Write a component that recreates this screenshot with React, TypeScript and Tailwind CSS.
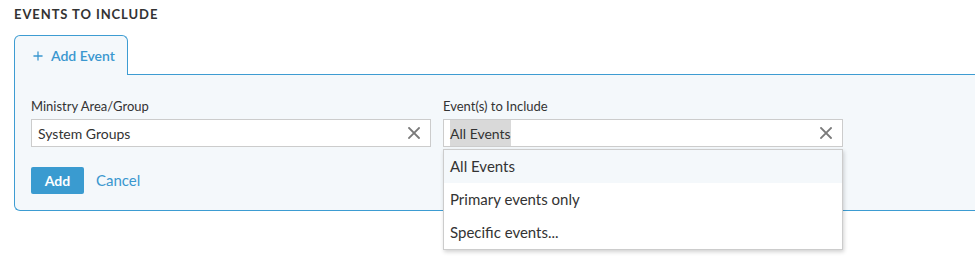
import { Plus } from "lucide-react";

const options = ["All Events", "Primary events only", "Specific events..."];

function ClearIcon() {
  return (
    <svg width="12" height="12" viewBox="0 0 12 12" className="shrink-0">
      <path d="M1 1L11 11M11 1L1 11" stroke="#7a7a7a" strokeWidth="1.8" strokeLinecap="square" />
    </svg>
  );
}

export default function App() {
  return (
    <div
      className="w-full h-[266px] bg-white text-[#333] overflow-hidden"
      style={{ fontFamily: "Lato, 'Open Sans', sans-serif" }}
    >
      {/* 标题 */}
      <div className="pl-[14px] pt-[6px] text-[13px] font-bold tracking-[0.07em] uppercase leading-[16px] text-[#333]">
        Events to Include
      </div>

      <div className="pl-[14px] mt-[13px]">
        {/* 标签页 */}
        <div className="relative z-10 -mb-px flex h-[40px] w-[114px] items-center gap-[6px] rounded-t-[6px] border border-b-0 border-[#3d9cd2] bg-[#f4f8fb] pl-[16px] text-[14px] font-semibold text-[#3a97cf]">
          <Plus size={14} strokeWidth={2.2} />
          <span>Add Event</span>
        </div>

        {/* 面板 */}
        <div className="rounded-bl-[6px] border border-r-0 border-[#3d9cd2] bg-[#f4f8fb] pl-[16px] pt-[22px] pb-[16px]">
          <div className="flex gap-[12px]">
            <div className="w-[400px]">
              <div className="text-[13px] leading-[18px] mb-[4px]">Ministry Area/Group</div>
              <div className="flex h-[28px] items-center justify-between border border-[#ccc] bg-white pl-[6px] pr-[10px] text-[14px]">
                <span>System Groups</span>
                <ClearIcon />
              </div>
            </div>
            <div className="relative w-[400px]">
              <div className="text-[13px] leading-[18px] mb-[4px]">Event(s) to Include</div>
              <div className="flex h-[28px] items-center justify-between border border-[#ccc] bg-white pl-[6px] pr-[10px] text-[14px]">
                <span className="flex h-[26px] items-center bg-[#d9d9d9]">All Events</span>
                <ClearIcon />
              </div>
              {/* 下拉菜单 */}
              <div className="absolute left-0 top-[52px] z-20 w-[400px] border border-[#ccc] bg-white shadow-[1px_2px_4px_rgba(0,0,0,0.18)]">
                {options.map((opt, i) => (
                  <div
                    key={opt}
                    className={`flex h-[33px] items-center pl-[6px] text-[15px] ${i === 0 ? "bg-[#f4f8fb]" : ""}`}
                  >
                    {opt}
                  </div>
                ))}
              </div>
            </div>
          </div>

          <div className="mt-[20px] flex items-center gap-[12px]">
            <button className="h-[27px] w-[53px] rounded-[2px] bg-[#3a9bd0] text-[14px] font-bold text-white">
              Add
            </button>
            <span className="text-[15px] text-[#3a97cf]">Cancel</span>
          </div>
        </div>
      </div>
    </div>
  );
}
